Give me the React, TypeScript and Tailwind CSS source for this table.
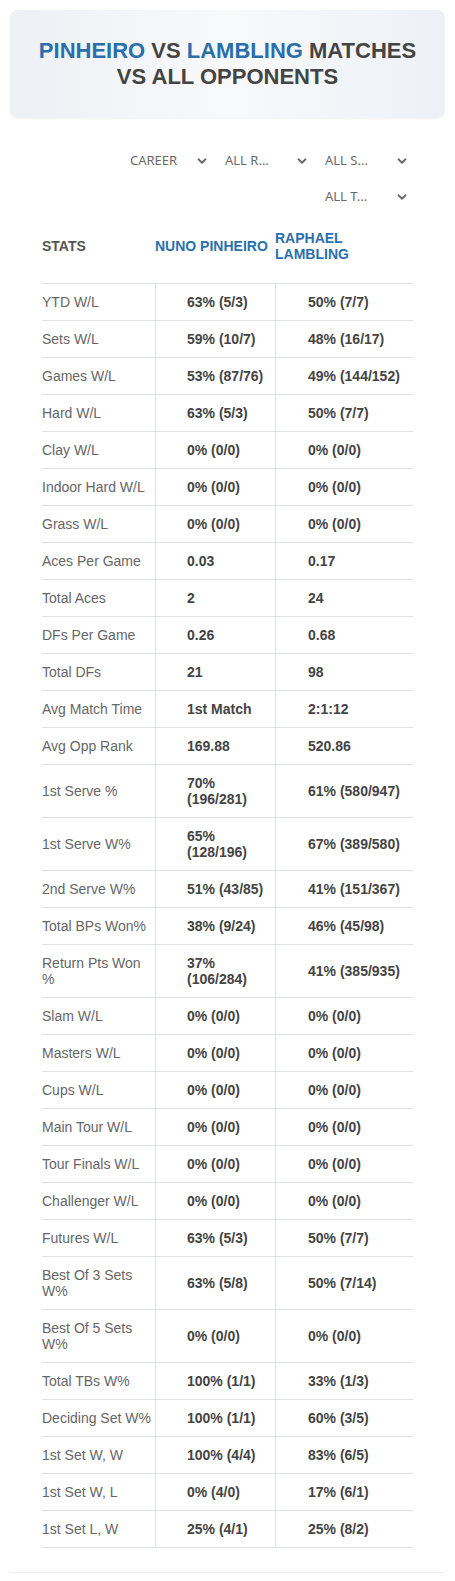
import { ChevronDown } from "lucide-react";

const rows: [string, string, string][] = [
  ["YTD W/L", "63% (5/3)", "50% (7/7)"],
  ["Sets W/L", "59% (10/7)", "48% (16/17)"],
  ["Games W/L", "53% (87/76)", "49% (144/152)"],
  ["Hard W/L", "63% (5/3)", "50% (7/7)"],
  ["Clay W/L", "0% (0/0)", "0% (0/0)"],
  ["Indoor Hard W/L", "0% (0/0)", "0% (0/0)"],
  ["Grass W/L", "0% (0/0)", "0% (0/0)"],
  ["Aces Per Game", "0.03", "0.17"],
  ["Total Aces", "2", "24"],
  ["DFs Per Game", "0.26", "0.68"],
  ["Total DFs", "21", "98"],
  ["Avg Match Time", "1st Match", "2:1:12"],
  ["Avg Opp Rank", "169.88", "520.86"],
  ["1st Serve %", "70% (196/281)", "61% (580/947)"],
  ["1st Serve W%", "65% (128/196)", "67% (389/580)"],
  ["2nd Serve W%", "51% (43/85)", "41% (151/367)"],
  ["Total BPs Won%", "38% (9/24)", "46% (45/98)"],
  ["Return Pts Won %", "37% (106/284)", "41% (385/935)"],
  ["Slam W/L", "0% (0/0)", "0% (0/0)"],
  ["Masters W/L", "0% (0/0)", "0% (0/0)"],
  ["Cups W/L", "0% (0/0)", "0% (0/0)"],
  ["Main Tour W/L", "0% (0/0)", "0% (0/0)"],
  ["Tour Finals W/L", "0% (0/0)", "0% (0/0)"],
  ["Challenger W/L", "0% (0/0)", "0% (0/0)"],
  ["Futures W/L", "63% (5/3)", "50% (7/7)"],
  ["Best Of 3 Sets W%", "63% (5/8)", "50% (7/14)"],
  ["Best Of 5 Sets W%", "0% (0/0)", "0% (0/0)"],
  ["Total TBs W%", "100% (1/1)", "33% (1/3)"],
  ["Deciding Set W%", "100% (1/1)", "60% (3/5)"],
  ["1st Set W, W", "100% (4/4)", "83% (6/5)"],
  ["1st Set W, L", "0% (4/0)", "17% (6/1)"],
  ["1st Set L, W", "25% (4/1)", "25% (8/2)"],
];

function Select({ label, first }: { label: string; first?: boolean }) {
  return (
    <div className={`flex h-[36px] w-[100px] items-center justify-between pr-[4px] ${first ? "pl-[17px]" : "pl-[12px]"}`}>
      <span className="text-[13px] text-[#6a6a6a]">{label}</span>
      <ChevronDown size={14} strokeWidth={3.2} className="text-[#6a6a6a]" />
    </div>
  );
}

export default function App() {
  return (
    <div className="min-h-[1581px] bg-white px-[10px] pt-[10px] font-[family-name:Liberation_Sans,Arial,sans-serif]">
      {/* Title card */}
      <div className="rounded-lg bg-gradient-to-r from-[#edf0f4] via-[#f8f9fb] to-[#edf1f6] px-2 py-[28px] text-center shadow-[0_1px_2px_rgba(0,0,0,0.05)]">
        <h1 className="text-[22px] font-bold uppercase leading-[26px] text-[#444]">
          <span className="text-[#2a6eab]">Pinheiro</span> vs{" "}
          <span className="text-[#2a6eab]">Lambling</span> Matches
          <br />
          vs All Opponents
        </h1>
      </div>

      <div className="border-b border-[#eeeeee] px-[32px] pb-[24px] pt-[25px]">
        {/* Filters */}
        <div className="flex flex-wrap justify-end font-['Noto_Sans',sans-serif]">
          <Select label="CAREER" first />
          <Select label="ALL R..." />
          <Select label="ALL S..." />
          <Select label="ALL T..." />
        </div>

        {/* Table header */}
        <div className="grid grid-cols-[113px_120px_1fr] border-b border-[#dfe2e5] pb-[21px] pt-[15px] text-[14px] font-bold uppercase leading-[16px]">
          <div className="flex items-center text-[#555]">Stats</div>
          <div className="flex items-center text-[#2a70ad]">Nuno Pinheiro</div>
          <div className="flex items-center text-[#2a70ad]">Raphael<br />Lambling</div>
        </div>

        {/* Rows */}
        {rows.map(([name, a, b]) => (
          <div key={name} className="grid grid-cols-[113px_120px_1fr] border-b border-[#dfe2e5] text-[14px] leading-[16px]">
            <div className="flex items-center py-[10px] pr-[2px] text-[#666]">{name}</div>
            <div className="flex items-center border-l border-[#dfe2e5] py-[10px] pl-[31px] pr-[4px] font-bold text-[#444]">{a}</div>
            <div className="flex items-center border-l border-[#dfe2e5] py-[10px] pl-[32px] font-bold text-[#444]">{b}</div>
          </div>
        ))}
      </div>
    </div>
  );
}
